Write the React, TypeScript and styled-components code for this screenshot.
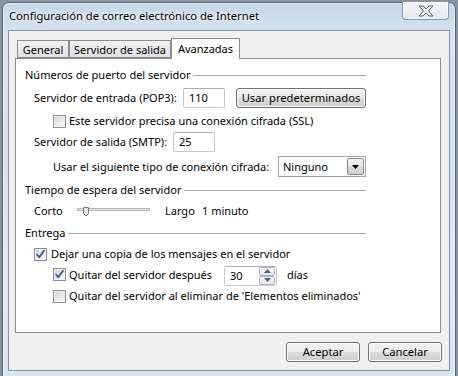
import styled, { createGlobalStyle } from "styled-components";

const GlobalStyle = createGlobalStyle`
  html, body {
    margin: 0;
    padding: 0;
  }
  body {
    width: 458px;
    height: 376px;
    overflow: hidden;
    background: #8593a3;
    font-family: "Noto Sans", "Liberation Sans", sans-serif;
    font-size: 11px;
    color: #000;
  }
`;

export default function App() {
  return (
    <>
      <GlobalStyle />
      <Window>
        <TitleBar>
          <TitleText>Configuración de correo electrónico de Internet</TitleText>
          <CloseButton>
            <svg width="18" height="12" viewBox="0 0 18 12">
              <path
                d="M2 1 H6 L9 4 L12 1 H16 L11.5 6 L16 11 H12 L9 8 L6 11 H2 L6.5 6 Z"
                fill="#f2f4f6"
                stroke="#5b5f66"
                strokeWidth="1"
                strokeLinejoin="round"
              />
            </svg>
          </CloseButton>
        </TitleBar>

        <Client>
          <TabRow>
            <Tab $width={52}>General</Tab>
            <Tab $width={102}>Servidor de salida</Tab>
            <Tab $width={69} $active>
              Avanzadas
            </Tab>
          </TabRow>

          <Panel>
            <GroupHeader $top={8}>
              <span>Números de puerto del servidor</span>
              <Rule />
            </GroupHeader>

            <Row $top={5} $height={20} $indent={9}>
              <Label $width={149}>Servidor de entrada (POP3):</Label>
              <TextBox $width={42}>110</TextBox>
              <PushButton $width={130} $gap={11}>
                Usar predeterminados
              </PushButton>
            </Row>

            <Row $top={6} $height={14} $indent={28}>
              <CheckBox />
              <CheckText>Este servidor precisa una conexión cifrada (SSL)</CheckText>
            </Row>

            <Row $top={4} $height={20} $indent={9}>
              <Label $width={139}>Servidor de salida (SMTP):</Label>
              <TextBox $width={42}>25</TextBox>
            </Row>

            <Row $top={4} $height={21} $indent={28}>
              <Label $width={225}>Usar el siguiente tipo de conexión cifrada:</Label>
              <Select>
                <span>Ninguno</span>
                <DropButton>
                  <svg width="7" height="4" viewBox="0 0 7 4">
                    <path d="M0 0 H7 L3.5 4 Z" fill="#000" />
                  </svg>
                </DropButton>
              </Select>
            </Row>

            <GroupHeader $top={5}>
              <span>Tiempo de espera del servidor</span>
              <Rule />
            </GroupHeader>

            <Row $top={4} $height={18} $indent={9}>
              <Label $width={43}>Corto</Label>
              <svg width="73" height="18" viewBox="0 0 73 18">
                <rect x="0.5" y="6.5" width="72" height="2" fill="#e7eaea" stroke="#b4b4b4" />
                <path
                  d="M6.5 5.5 H11.5 V11.5 L9 14 L6.5 11.5 Z"
                  fill="#eaeaea"
                  stroke="#777"
                  strokeLinejoin="round"
                />
              </svg>
              <Label $width={37} $gap={15}>
                Largo
              </Label>
              <Label>1 minuto</Label>
            </Row>

            <GroupHeader $top={5}>
              <span>Entrega</span>
              <Rule />
            </GroupHeader>

            <Row $top={6} $height={14} $indent={9}>
              <CheckBox $checked />
              <CheckText $gap={4}>Dejar una copia de los mensajes en el servidor</CheckText>
            </Row>

            <Row $top={3} $height={21} $indent={28}>
              <CheckBox $checked />
              <CheckText $width={155}>Quitar del servidor después</CheckText>
              <Spinner>
                <span>30</span>
                <SpinButtons>
                  <SpinHalf>
                    <svg width="7" height="4" viewBox="0 0 7 4">
                      <path d="M0 4 H7 L3.5 0 Z" fill="#4c5d80" />
                    </svg>
                  </SpinHalf>
                  <SpinHalf>
                    <svg width="7" height="4" viewBox="0 0 7 4">
                      <path d="M0 0 H7 L3.5 4 Z" fill="#4c5d80" />
                    </svg>
                  </SpinHalf>
                </SpinButtons>
              </Spinner>
              <Label $gap={10}>días</Label>
            </Row>

            <Row $top={4} $height={14} $indent={28}>
              <CheckBox />
              <CheckText>Quitar del servidor al eliminar de 'Elementos eliminados'</CheckText>
            </Row>
          </Panel>

          <ButtonRow>
            <PushButton $width={74}>Aceptar</PushButton>
            <PushButton $width={74}>Cancelar</PushButton>
          </ButtonRow>
        </Client>
      </Window>
    </>
  );
}

const CheckBox = ({ $checked }: { $checked?: boolean }) => (
  <CheckBoxFrame>
    {$checked ? (
      <svg width="11" height="11" viewBox="0 0 11 11">
        <path
          d="M2 5.5 L4.3 8.2 L9 1.8"
          fill="none"
          stroke="#3d5a98"
          strokeWidth="1.8"
          strokeLinecap="round"
          strokeLinejoin="round"
        />
      </svg>
    ) : null}
  </CheckBoxFrame>
);

const Window = styled.div`
  box-sizing: border-box;
  margin: 2px 0 0 2px;
  width: 454px;
  height: 380px;
  border: 1px solid #56616e;
  border-radius: 7px 7px 0 0;
  padding: 0 5px;
  background: linear-gradient(
    to bottom,
    #c6d7e9 0%,
    #d9e5f1 10%,
    #d3e1ee 40%,
    #e0eaf4 70%,
    #d8e5f1 100%
  );
  box-shadow: inset 0 0 0 1px rgba(255, 255, 255, 0.6);
`;

const TitleBar = styled.div`
  height: 27px;
  display: flex;
  justify-content: space-between;
  align-items: flex-start;
`;

const TitleText = styled.div`
  margin: 5px 0 0 1px;
  line-height: 16px;
  font-size: 11.2px;
  color: #000;
  text-shadow: 0 0 6px #fff, 0 0 3px #fff;
`;

const CloseButton = styled.div`
  box-sizing: border-box;
  width: 47px;
  height: 18px;
  margin-top: -1px;
  margin-right: 1px;
  display: flex;
  align-items: center;
  justify-content: center;
  border: 1px solid #8b95a1;
  border-top: none;
  border-radius: 0 0 4px 4px;
  background: linear-gradient(to bottom, #f3f6f9, #e3e9ef);
  box-shadow: inset 0 0 0 1px rgba(255, 255, 255, 0.7);
`;

const Client = styled.div`
  box-sizing: border-box;
  width: 442px;
  height: 341px;
  border: 1px solid #8693a2;
  background: #f0f0f0;
  padding: 7px 8px 0 6px;
`;

const TabRow = styled.div`
  display: flex;
  align-items: flex-end;
  height: 21px;
  padding-left: 2px;
  margin-bottom: -1px;
  position: relative;
  z-index: 1;
`;

const Tab = styled.div<{ $width: number; $active?: boolean }>`
  box-sizing: border-box;
  width: ${(p) => p.$width}px;
  height: ${(p) => (p.$active ? 21 : 18)}px;
  margin-bottom: ${(p) => (p.$active ? 0 : 1)}px;
  border: 1px solid #898c95;
  border-bottom-width: ${(p) => (p.$active ? 0 : 1)}px;
  background: ${(p) =>
    p.$active ? "#fff" : "linear-gradient(to bottom, #f2f2f2, #e1e1e1)"};
  display: flex;
  justify-content: center;
  align-items: ${(p) => (p.$active ? "flex-start" : "center")};
  padding-top: ${(p) => (p.$active ? 2 : 1)}px;
  line-height: 16px;
  white-space: nowrap;
`;

const Panel = styled.div`
  box-sizing: border-box;
  width: 426px;
  height: 275px;
  border: 1px solid #898c95;
  background: #fff;
  padding: 0 74px 0 9px;
  display: flex;
  flex-direction: column;
`;

const GroupHeader = styled.div<{ $top: number }>`
  display: flex;
  align-items: center;
  height: 16px;
  margin-top: ${(p) => p.$top}px;
  line-height: 16px;
  white-space: nowrap;
  gap: 3px;
`;

const Rule = styled.div`
  flex: 1;
  height: 1px;
  background: #a9a9a9;
`;

const Row = styled.div<{ $top: number; $height: number; $indent: number }>`
  display: flex;
  align-items: center;
  height: ${(p) => p.$height}px;
  margin-top: ${(p) => p.$top}px;
  padding-left: ${(p) => p.$indent}px;
  line-height: 16px;
  white-space: nowrap;
`;

const Label = styled.span<{ $width?: number; $gap?: number }>`
  flex: none;
  width: ${(p) => (p.$width ? `${p.$width}px` : "auto")};
  margin-left: ${(p) => p.$gap ?? 0}px;
`;

const CheckText = styled.span<{ $width?: number; $gap?: number }>`
  flex: none;
  width: ${(p) => (p.$width ? `${p.$width}px` : "auto")};
  margin-left: ${(p) => p.$gap ?? 3}px;
`;

const CheckBoxFrame = styled.div`
  box-sizing: border-box;
  flex: none;
  width: 13px;
  height: 13px;
  border: 1px solid #8e8f8f;
  background: linear-gradient(135deg, #cbcfd5 0%, #e6e8eb 50%, #f8f8f8 100%);
  box-shadow: inset 0 0 0 1px #f4f4f4;
  display: flex;
  align-items: center;
  justify-content: center;
`;

const TextBox = styled.div<{ $width: number }>`
  box-sizing: border-box;
  flex: none;
  width: ${(p) => p.$width}px;
  height: 20px;
  padding-left: 5px;
  border: 1px solid #c5c8cd;
  border-top-color: #abadb3;
  border-radius: 2px;
  background: #fff;
  display: flex;
  align-items: center;
`;

const PushButton = styled.div<{ $width: number; $gap?: number }>`
  box-sizing: border-box;
  flex: none;
  width: ${(p) => p.$width}px;
  height: 20px;
  margin-left: ${(p) => p.$gap ?? 0}px;
  border: 1px solid #707070;
  border-radius: 3px;
  background: linear-gradient(
    to bottom,
    #f2f2f2 0%,
    #ebebeb 50%,
    #dddddd 50%,
    #cfcfcf 100%
  );
  box-shadow: inset 0 0 0 1px #fcfcfc;
  display: flex;
  align-items: center;
  justify-content: center;
  line-height: 16px;
  font-size: 11.2px;
`;

const Select = styled.div`
  box-sizing: border-box;
  flex: none;
  width: 88px;
  height: 21px;
  border: 1px solid #a5a5a5;
  background: #fff;
  display: flex;
  align-items: center;
  justify-content: space-between;
  padding: 0 1px 0 4px;
`;

const DropButton = styled.div`
  box-sizing: border-box;
  width: 17px;
  height: 17px;
  border: 1px solid #8a8a8a;
  border-radius: 2px;
  background: linear-gradient(to bottom, #f2f2f2 0%, #ebebeb 50%, #dadada 50%, #cfcfcf 100%);
  display: flex;
  align-items: center;
  justify-content: center;
`;

const Spinner = styled.div`
  box-sizing: border-box;
  flex: none;
  width: 53px;
  height: 20px;
  margin-top: 2px;
  border: 1px solid #c5c8cd;
  border-top-color: #abadb3;
  border-radius: 2px;
  background: #fff;
  display: flex;
  align-items: center;
  justify-content: space-between;
  padding: 0 1px 0 5px;
`;

const SpinButtons = styled.div`
  width: 16px;
  height: 18px;
  display: flex;
  flex-direction: column;
`;

const SpinHalf = styled.div`
  box-sizing: border-box;
  flex: 1;
  border: 1px solid #b0b4ba;
  border-radius: 2px;
  background: linear-gradient(to bottom, #f6f6f6, #e3e6ea);
  display: flex;
  align-items: center;
  justify-content: center;
`;

const ButtonRow = styled.div`
  display: flex;
  justify-content: flex-end;
  gap: 8px;
  margin: 9px -1px 0 0;
`;
